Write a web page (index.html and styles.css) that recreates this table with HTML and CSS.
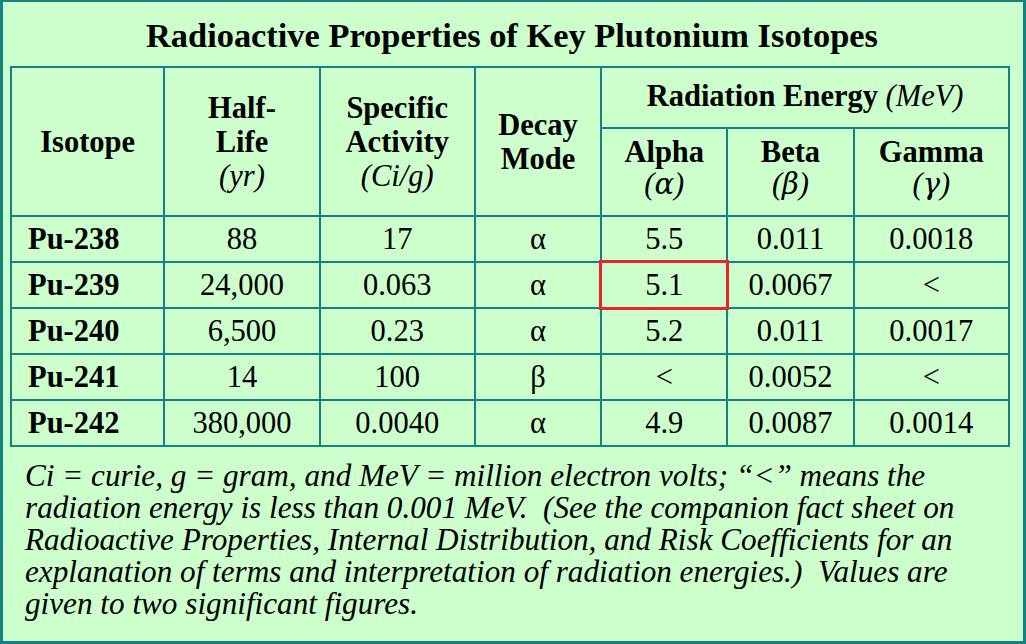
FILE: index.html
```html
<!DOCTYPE html>
<html>
<head>
<meta charset="utf-8">
<link rel="stylesheet" href="styles.css">
</head>
<body>
<div class="frame">
  <h1 class="title">Radioactive Properties of Key Plutonium Isotopes</h1>
  <table class="iso">
    <colgroup>
      <col class="c-iso"><col class="c-wide"><col class="c-wide"><col class="c-narrow"><col class="c-narrow"><col class="c-narrow"><col class="c-wide">
    </colgroup>
    <thead>
      <tr class="h1row">
        <th rowspan="2">Isotope</th>
        <th rowspan="2">Half-<br>Life<br><i class="unit">(yr)</i></th>
        <th rowspan="2">Specific<br>Activity<br><i class="unit">(Ci/g)</i></th>
        <th rowspan="2">Decay<br>Mode</th>
        <th colspan="3" class="group">Radiation Energy <i class="unit">(MeV)</i></th>
      </tr>
      <tr class="h2row">
        <th class="sub">Alpha<br><i class="unit">(<span class="gk">α</span>)</i></th>
        <th class="sub">Beta<br><i class="unit">(<span class="gk">β</span>)</i></th>
        <th class="sub">Gamma<br><i class="unit">(<span class="gk">γ</span>)</i></th>
      </tr>
    </thead>
    <tbody>
      <tr><th class="rowh">Pu-238</th><td>88</td><td>17</td><td>α</td><td>5.5</td><td>0.011</td><td>0.0018</td></tr>
      <tr><th class="rowh">Pu-239</th><td>24,000</td><td>0.063</td><td>α</td><td class="hl">5.1</td><td>0.0067</td><td>&lt;</td></tr>
      <tr><th class="rowh">Pu-240</th><td>6,500</td><td>0.23</td><td>α</td><td>5.2</td><td>0.011</td><td>0.0017</td></tr>
      <tr><th class="rowh">Pu-241</th><td>14</td><td>100</td><td>β</td><td>&lt;</td><td>0.0052</td><td>&lt;</td></tr>
      <tr><th class="rowh">Pu-242</th><td>380,000</td><td>0.0040</td><td>α</td><td>4.9</td><td>0.0087</td><td>0.0014</td></tr>
    </tbody>
  </table>
  <p class="note">Ci = curie, g = gram, and MeV = million electron volts; “&lt;” means the<br>radiation energy is less than 0.001 MeV.&nbsp; (See the companion fact sheet on<br>Radioactive Properties, Internal Distribution, and Risk Coefficients for an<br>explanation of terms and interpretation of radiation energies.)&nbsp; Values are<br>given to two significant figures.</p>
</div>
</body>
</html>
```

FILE: styles.css
```css
html, body {
  margin: 0;
  padding: 0;
}
body {
  background: #ccffcc;
  font-family: "Liberation Serif", "Times New Roman", serif;
  color: #000;
}
.frame {
  box-sizing: border-box;
  width: 1026px;
  height: 644px;
  border-style: solid;
  border-color: #128383;
  border-width: 2px 3px 3px 3px;
  background: #ccffcc;
  padding: 15px 0 0 7px;
  overflow: hidden;
}
.title {
  margin: 0 0 13px 0;
  font-size: 34.4px;
  line-height: 36px;
  font-weight: bold;
  text-align: center;
  width: 1004px;
  white-space: nowrap;
}
.iso {
  border-collapse: collapse;
  table-layout: fixed;
  width: 1000px;
  font-size: 30.5px;
  border: 2px solid #128383;
}
.c-iso { width: 153px; }
.c-wide { width: 155px; }
.c-narrow { width: 126px; }
.iso th, .iso td {
  border: 2px solid #128383;
  padding: 0;
  text-align: center;
  vertical-align: middle;
}
.iso thead th {
  font-weight: bold;
  line-height: 34px;
}
.h1row { height: 61px; }
.h2row { height: 88px; }
.iso th.group {
  line-height: 34px;
  padding-bottom: 4px;
}
.iso th.sub {
  line-height: 32px;
  padding-bottom: 8px;
}
.unit {
  font-weight: normal;
  font-style: italic;
}
.gk {
  font-family: "DejaVu Serif", "Liberation Serif", serif;
  font-style: italic;
  font-size: 0.95em;
}
.iso tbody tr { height: 46px; }
.iso tbody td {
  font-weight: normal;
  line-height: 32px;
}
.iso th.rowh {
  text-align: left;
  padding-left: 16px;
  font-weight: bold;
  line-height: 32px;
}
.iso td.hl {
  outline: 3px solid #e8242a;
  outline-offset: -1px;
}
.note {
  margin: 13px 0 0 15px;
  font-size: 31.2px;
  line-height: 32px;
  font-style: italic;
  white-space: nowrap;
}
```
